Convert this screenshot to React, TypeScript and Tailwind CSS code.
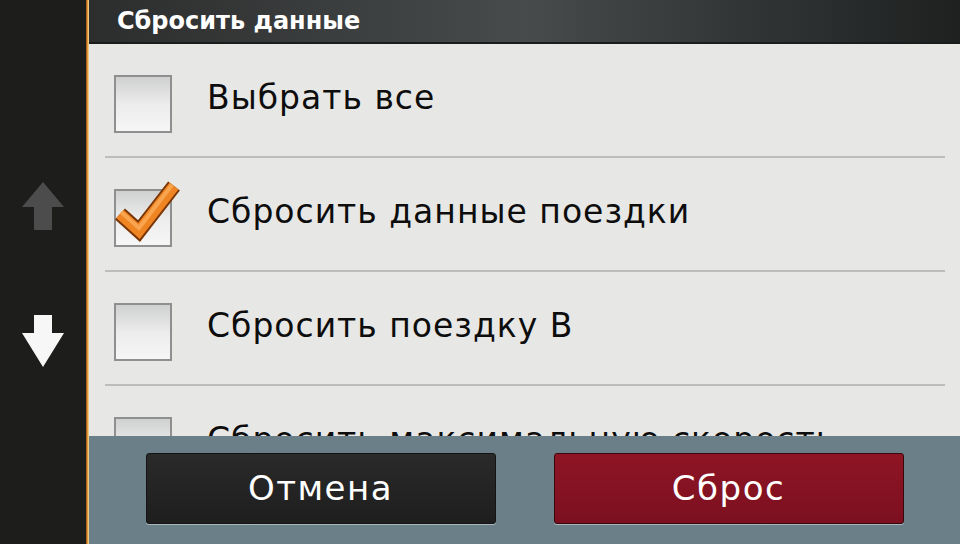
const rows = [
  { label: "Выбрать все", checked: false },
  { label: "Сбросить данные поездки", checked: true },
  { label: "Сбросить поездку B", checked: false },
  { label: "Сбросить максимальную скорость", checked: false },
];

function Checkbox({ checked }: { checked: boolean }) {
  return (
    <div className="relative mt-[8px] h-[58px] w-[58px] shrink-0 border-2 border-[#8f8f8f] bg-linear-to-b from-[#cfd0d0] via-[#ececec] to-[#f6f6f6]">
      {checked && (
        <svg
          className="absolute -left-[8px] -top-[14px]"
          width="76"
          height="70"
          viewBox="0 0 76 70"
        >
          <polyline
            points="12,37 31,54 66,9"
            fill="none"
            stroke="#7a3606"
            strokeWidth="15"
            strokeLinejoin="miter"
          />
          <polyline
            points="12,37 31,54 66,9"
            fill="none"
            stroke="#ef8422"
            strokeWidth="11"
            strokeLinejoin="miter"
          />
          <polyline
            points="13,35 31,51 64,8"
            fill="none"
            stroke="#f9a550"
            strokeWidth="4"
            strokeLinejoin="miter"
          />
        </svg>
      )}
    </div>
  );
}

export default function App() {
  return (
    <div className="flex h-[544px] w-[960px] overflow-hidden bg-[#1d1d1b] font-['DejaVu_Sans',sans-serif]">
      {/* scroll arrows */}
      <aside className="flex w-[86px] shrink-0 flex-col items-center pt-[182px]">
        <svg width="42" height="48" viewBox="0 0 42 48">
          <polygon points="0,25 21,0 42,25 30,25 30,48 12,48 12,25" fill="#4b4c4b" />
        </svg>
        <svg className="mt-[85px]" width="42" height="52" viewBox="0 0 42 52">
          <polygon points="12,0 30,0 30,18 42,18 21,52 0,18 12,18" fill="#f7f7f7" />
        </svg>
      </aside>
      <div className="w-[3px] shrink-0 bg-linear-to-r from-[#8c4a10] via-[#e09a3a] to-[#f7dfa0]" />

      <main className="flex min-w-0 flex-1 flex-col">
        <header className="flex h-[44px] shrink-0 items-center border-b-2 border-[#1b1c1c] bg-linear-to-r from-[#2c2d2d] via-[#474b4c] to-[#1f2121] pl-[28px] pb-[1px]">
          <h1 className="text-[24px] font-bold leading-none text-white">Сбросить данные</h1>
        </header>

        <section className="flex-1 overflow-hidden bg-[#e7e7e5]">
          {rows.map((row) => (
            <div key={row.label}>
              <div className="flex h-[112px] items-center pl-[25px]">
                <Checkbox checked={row.checked} />
                <span className="mb-[6px] ml-[35px] whitespace-nowrap text-[33px] leading-none tracking-[1px] text-[#0d0d0d]">
                  {row.label}
                </span>
              </div>
              <div className="ml-[16px] mr-[15px] h-[2px] bg-[#bdbdbb]" />
            </div>
          ))}
        </section>

        <footer className="flex h-[108px] shrink-0 justify-center gap-[58px] bg-[#6b7f88] pt-[17px]">
          <button className="flex h-[71px] w-[350px] items-center justify-center rounded-[3px] border border-[#141414] bg-linear-to-b from-[#2a2a2a] to-[#1e1e1e] text-[34px] tracking-[1.5px] text-white shadow-[0_1px_0_#aab6bb]">
            Отмена
          </button>
          <button className="flex h-[71px] w-[350px] items-center justify-center rounded-[3px] border border-[#3a070c] bg-linear-to-b from-[#8e1524] to-[#7c1020] text-[34px] tracking-[1.5px] text-white shadow-[0_1px_0_#aab6bb]">
            Сброс
          </button>
        </footer>
      </main>
    </div>
  );
}
